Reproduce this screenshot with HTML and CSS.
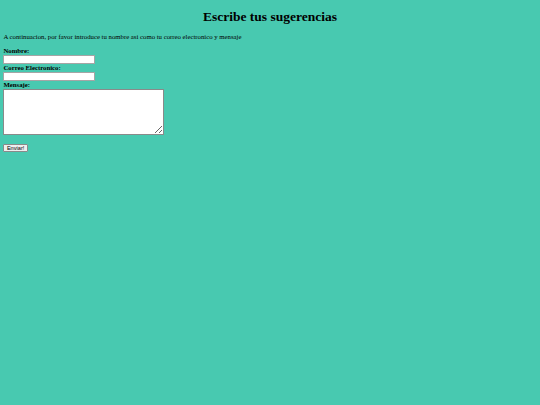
FILE: index.html
```html
<!DOCTYPE html>
<html lang="es">
<head>
<meta charset="utf-8">
<title>Escribe tus sugerencias</title>
<link rel="stylesheet" href="styles.css">
</head>
<body>
<h1 class="title">Escribe tus sugerencias</h1>
<p class="intro">A continuacion, por favor introduce tu nombre asi como tu correo electronico y mensaje</p>
<form class="form">
  <label class="label" for="nombre">Nombre:</label>
  <input class="field" type="text" id="nombre">
  <label class="label" for="correo">Correo Electronico:</label>
  <input class="field" type="text" id="correo">
  <label class="label" for="mensaje">Mensaje:</label>
  <textarea class="message" id="mensaje"></textarea>
  <button class="send" type="button">Enviar!</button>
</form>
</body>
</html>
```

FILE: styles.css
```css
html, body {
  background: #48c9b0;
}
body {
  margin: 0;
  padding: 0 3.4px;
  font-family: "Liberation Serif", "Times New Roman", serif;
  font-size: 6.75px;
  color: #000;
}
.title {
  font-size: 13.5px;
  line-height: 15.5px;
  text-align: center;
  margin: 9px 0 8.5px;
}
.intro {
  margin: 6.75px 0;
  line-height: 7.7px;
}
.form {
  display: flex;
  flex-direction: column;
  align-items: flex-start;
}
.label {
  font-weight: bold;
  line-height: 7.7px;
}
.field {
  width: 92px;
  height: 9px;
  box-sizing: border-box;
  margin: 0;
  padding: 0;
  border: 1px solid #a5a5a5;
  background: #fff;
  font-size: 5.6px;
}
.message {
  width: 161px;
  height: 46.5px;
  box-sizing: border-box;
  margin: 0;
  padding: 1px;
  border: 1px solid #8a8a8a;
  background: #fff;
  font-size: 5.6px;
  resize: both;
}
.send {
  margin: 8.5px 0 0 0;
  height: 8.5px;
  padding: 0 2.5px;
  font-family: "Liberation Sans", Arial, sans-serif;
  font-size: 5.6px;
  line-height: 6px;
  border: 1px solid #8a8a8a;
  border-radius: 1px;
  background: #efefef;
  color: #000;
}
```
